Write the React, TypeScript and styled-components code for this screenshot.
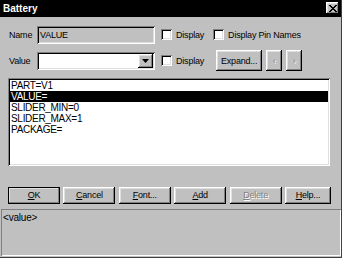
import styled, { createGlobalStyle, css } from "styled-components";

const GlobalStyle = createGlobalStyle`
  html, body {
    margin: 0;
    padding: 0;
    background: #ffffff;
  }
  body {
    font-family: "Liberation Sans", Arial, sans-serif;
    font-size: 9px;
    letter-spacing: -0.2px;
    color: #000;
  }
`;

const raised = css`
  box-shadow: inset -1px -1px #000, inset 1px 1px #fff, inset -2px -2px #808080,
    inset 2px 2px #dfdfdf;
`;

const sunken = css`
  box-shadow: inset 1px 1px #808080, inset -1px -1px #fff, inset 2px 2px #000,
    inset -2px -2px #dfdfdf;
`;

const Window = styled.div`
  width: 342px;
  height: 258px;
  box-sizing: border-box;
  background: #c0c0c0;
  border-right: 1px solid #404040;
  border-bottom: 1px solid #404040;
  display: flex;
  flex-direction: column;
`;

const TitleBar = styled.div`
  height: 17px;
  background: #000;
  display: flex;
  align-items: center;
  justify-content: space-between;
  padding: 0 2px 0 3px;
`;

const Title = styled.span`
  color: #fff;
  font-weight: bold;
  font-size: 10px;
  letter-spacing: 0;
`;

const CloseBox = styled.div`
  width: 13px;
  height: 12px;
  background: #c0c0c0;
  ${raised};
  display: flex;
  align-items: center;
  justify-content: center;
`;

const Body = styled.div`
  flex: 1;
  display: flex;
  flex-direction: column;
  padding: 8px 10px 0 8px;
`;

const Row = styled.div<{ $top: number }>`
  display: flex;
  align-items: center;
  margin-top: ${(p) => p.$top}px;
  height: 20px;
`;

const Label = styled.span`
  width: 28px;
  padding-left: 1px;
`;

const Field = styled.div<{ $disabled?: boolean }>`
  width: 118px;
  height: 18px;
  box-sizing: border-box;
  padding: 3px 3px;
  background: ${(p) => (p.$disabled ? "#c0c0c0" : "#fff")};
  ${sunken};
  display: flex;
  align-items: center;
  justify-content: space-between;
`;

const DropButton = styled.div`
  width: 15px;
  height: 14px;
  margin-right: -1px;
  background: #c0c0c0;
  ${raised};
  display: flex;
  align-items: center;
  justify-content: center;
`;

const Check = styled.label<{ $gap: number }>`
  display: flex;
  align-items: center;
  margin-left: ${(p) => p.$gap}px;
  gap: 4px;
`;

const Box = styled.span`
  width: 11px;
  height: 11px;
  background: #fff;
  ${sunken};
`;

const Button = styled.div<{ $w: number; $h: number; $default?: boolean; $disabled?: boolean }>`
  width: ${(p) => p.$w}px;
  height: ${(p) => p.$h}px;
  box-sizing: border-box;
  background: #c0c0c0;
  ${raised};
  ${(p) => p.$default && "outline: 1px solid #000; outline-offset: -1px;"}
  display: flex;
  align-items: center;
  justify-content: center;
  color: ${(p) => (p.$disabled ? "#808080" : "#000")};
  text-shadow: ${(p) => (p.$disabled ? "1px 1px #fff" : "none")};
`;

const NavGroup = styled.div`
  display: flex;
  gap: 4px;
  margin-left: 4px;
`;

const ListBox = styled.div`
  margin-top: 7px;
  width: 322px;
  height: 88px;
  box-sizing: border-box;
  background: #fff;
  ${sunken};
  padding: 2px 2px;
  font-size: 10px;
  letter-spacing: -0.3px;
`;

const Item = styled.div<{ $selected?: boolean }>`
  height: 11px;
  line-height: 11px;
  padding-left: 1px;
  background: ${(p) => (p.$selected ? "#000" : "transparent")};
  color: ${(p) => (p.$selected ? "#fff" : "#000")};
`;

const ButtonRow = styled.div`
  margin-top: 21px;
  width: 323px;
  display: flex;
  justify-content: space-between;
`;

const StatusBox = styled.div`
  margin: 5px 0 1px 1px;
  height: 48px;
  box-sizing: border-box;
  padding: 3px 2px;
  font-size: 10px;
  box-shadow: inset 1px 1px #808080, inset -1px -1px #fff;
`;

const items = ["PART=V1", "VALUE=", "SLIDER_MIN=0", "SLIDER_MAX=1", "PACKAGE="];

export default function App() {
  return (
    <>
      <GlobalStyle />
      <Window>
        <TitleBar>
          <Title>Battery</Title>
          <CloseBox>
            <svg width="8" height="7" viewBox="0 0 8 7">
              <path d="M0 0 L7 7 M1 0 L8 7 M7 0 L0 7 M8 0 L1 7" stroke="#000" strokeWidth="1" />
            </svg>
          </CloseBox>
        </TitleBar>
        <Body>
          <Row $top={0}>
            <Label>Name</Label>
            <Field $disabled>VALUE</Field>
            <Check $gap={6}>
              <Box />
              Display
            </Check>
            <Check $gap={9}>
              <Box />
              Display Pin Names
            </Check>
          </Row>
          <Row $top={6}>
            <Label>Value</Label>
            <Field>
              <span />
              <DropButton>
                <svg width="7" height="4" viewBox="0 0 7 4">
                  <path d="M0 0 H7 L3.5 4 Z" fill="#000" />
                </svg>
              </DropButton>
            </Field>
            <Check $gap={6}>
              <Box />
              Display
            </Check>
            <Button $w={46} $h={21} style={{ marginLeft: 12 }}>
              Expand...
            </Button>
            <NavGroup>
              <Button $w={16} $h={21} $disabled>
                ‹
              </Button>
              <Button $w={16} $h={21} $disabled>
                ›
              </Button>
            </NavGroup>
          </Row>
          <ListBox>
            {items.map((t, i) => (
              <Item key={t} $selected={i === 1}>
                {t}
              </Item>
            ))}
          </ListBox>
          <ButtonRow>
            <Button $w={52} $h={17} $default>
              <span><u>O</u>K</span>
            </Button>
            <Button $w={52} $h={17}>
              <span><u>C</u>ancel</span>
            </Button>
            <Button $w={52} $h={17}>
              <span><u>F</u>ont...</span>
            </Button>
            <Button $w={52} $h={17}>
              <span><u>A</u>dd</span>
            </Button>
            <Button $w={52} $h={17} $disabled>
              <span><u>D</u>elete</span>
            </Button>
            <Button $w={46} $h={17}>
              <span><u>H</u>elp...</span>
            </Button>
          </ButtonRow>
        </Body>
        <StatusBox>&lt;value&gt;</StatusBox>
      </Window>
    </>
  );
}
